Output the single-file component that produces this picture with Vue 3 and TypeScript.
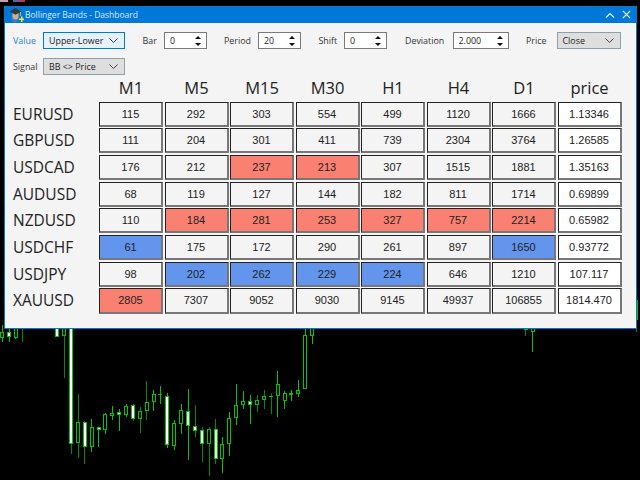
<script setup lang="ts">
type Tone = '' | 'hot' | 'cold'
interface Row { name: string; cells: (number | string)[]; tones: Record<number, Tone> }

const frames = ['M1', 'M5', 'M15', 'M30', 'H1', 'H4', 'D1', 'price']
const rows: Row[] = [
  { name: 'EURUSD', cells: [115, 292, 303, 554, 499, 1120, 1666, '1.13346'], tones: {} },
  { name: 'GBPUSD', cells: [111, 204, 301, 411, 739, 2304, 3764, '1.26585'], tones: {} },
  { name: 'USDCAD', cells: [176, 212, 237, 213, 307, 1515, 1881, '1.35163'], tones: { 2: 'hot', 3: 'hot' } },
  { name: 'AUDUSD', cells: [68, 119, 127, 144, 182, 811, 1714, '0.69899'], tones: {} },
  { name: 'NZDUSD', cells: [110, 184, 281, 253, 327, 757, 2214, '0.65982'], tones: { 1: 'hot', 2: 'hot', 3: 'hot', 4: 'hot', 5: 'hot', 6: 'hot' } },
  { name: 'USDCHF', cells: [61, 175, 172, 290, 261, 897, 1650, '0.93772'], tones: { 0: 'cold', 6: 'cold' } },
  { name: 'USDJPY', cells: [98, 202, 262, 229, 224, 646, 1210, '107.117'], tones: { 1: 'cold', 2: 'cold', 3: 'cold', 4: 'cold' } },
  { name: 'XAUUSD', cells: [2805, 7307, 9052, 9030, 9145, 49937, 106855, '1814.470'], tones: { 0: 'hot' } }
]

// x, wick top, wick bottom, body top, body bottom, kind (h hollow, f filled, d doji), dark wick
type C = [number, number, number, number, number, string, boolean?]
const raw: C[] = [
  [6, 0, 50, 20, 40, 'h'], [27, 10, 52, 20, 35, 'f'], [47, 10, 42, 10, 38, 'h'], [68, 10, 50, 0, 0, 'd', true],
  [172, 10, 35, 10, 35, 'f'], [192, 10, 158, 10, 32, 'h', true], [213, 10, 388, 10, 358, 'f', true],
  [234, 208, 398, 290, 355, 'h', true], [254, 288, 416, 292, 365, 'f', true], [275, 282, 380, 307, 365, 'h'],
  [296, 305, 365, 305, 314, 'f'], [316, 265, 327, 268, 314, 'h'], [337, 242, 285, 264, 273, 'h'],
  [358, 252, 317, 262, 271, 'f'], [378, 238, 275, 242, 269, 'h'], [399, 238, 287, 240, 282, 'f', true],
  [420, 247, 323, 258, 282, 'h', true], [440, 168, 285, 232, 259, 'h', true], [461, 195, 258, 208, 232, 'h'],
  [481, 183, 238, 208, 212, 'd'],
  [502, 205, 370, 212, 360, 'f'], [523, 285, 375, 295, 362, 'h'], [544, 238, 327, 256, 298, 'h'],
  [565, 192, 405, 257, 302, 'f'], [585, 240, 337, 304, 318, 'f', true], [606, 307, 410, 316, 356, 'f', true],
  [627, 307, 453, 313, 357, 'h', true], [647, 283, 417, 313, 403, 'f', true], [667, 337, 445, 356, 403, 'h'],
  [688, 260, 394, 280, 357, 'h'], [709, 178, 300, 241, 279, 'h'], [730, 198, 252, 227, 241, 'h'],
  [750, 210, 298, 227, 241, 'f'], [771, 210, 262, 224, 241, 'h', true], [792, 195, 252, 214, 225, 'h', true],
  [813, 205, 267, 214, 214, 'd', true], [833, 138, 277, 178, 212, 'h'], [854, 198, 252, 205, 227, 'h'],
  [874, 195, 228, 203, 210, 'f'], [895, 166, 215, 194, 206, 'h'], [916, 10, 193, 31, 193, 'h'], [937, 10, 58, 10, 32, 'h'],
  [1577, 0, 33, 0, 15, 'f', true], [1598, 0, 80, 0, 20, 'h']
]
const candles = raw.map(([x, wt, wb, bt, bb, kind, dark]) => ({
  x, kind, wick: dark ? '#008c00' : '#00c800',
  wt: wt + 975, wh: wb - wt, bt: bt + 975, bh: Math.max(bb - bt, 3)
}))
</script>

<template>
  <div class="screen">
    <svg class="chart" viewBox="0 0 1920 1440" width="640" height="480" shape-rendering="crispEdges" aria-hidden="true">
      <g v-for="(c, i) in candles" :key="i">
        <rect :x="c.x - 1.5" :y="c.wt" width="3" :height="c.wh" :fill="c.wick" />
        <rect v-if="c.kind === 'd'" :x="c.x - 6" :y="c.bt" width="12" height="3" fill="#00c800" />
        <template v-else>
          <rect :x="c.x - 6" :y="c.bt" width="12" :height="c.bh" fill="#00c800" />
          <rect :x="c.x - 3" :y="c.bt + 3" width="6" :height="Math.max(c.bh - 6, 0)" :fill="c.kind === 'f' ? '#fff' : '#000'" />
        </template>
      </g>
      <rect x="1911" y="900" width="3" height="60" fill="#00c800" />
      <rect x="1908" y="975" width="3" height="21" fill="#008c00" />
    </svg>
    <div class="flags"><i class="f-a"></i><i class="f-b"></i><i class="f-c"></i></div>

    <section class="window">
      <header class="titlebar">
        <svg class="appicon" viewBox="0 0 15 16" width="15" height="16">
          <circle cx="6" cy="12" r="3.600" fill="#3a78c8" />
          <path d="M3.500 6h6v3.500a3 3 0 0 1-6 0z" fill="#d0b088" />
          <path d="M0.500 4.500 6.500 1l6 3.500-6 3.200z" fill="#3a3a3a" />
          <path d="M11.500 5v4" stroke="#d8b040" stroke-width="1" />
          <path d="M10 11.500h2V9.500h1.500v2h1.500V13h-1.500v2H12v-2h-2z" fill="#f7e040" />
        </svg>
        <span class="title">Bollinger Bands - Dashboard</span>
        <svg class="winbtn chev" viewBox="0 0 10 6" width="10" height="6"><path d="M1 5.500 5 1.500l4 4" fill="none" stroke="#e8f2fb" stroke-width="1.200" /></svg>
        <svg class="winbtn" viewBox="0 0 9 9" width="9" height="9"><path d="M.8.800l7.400 7.400M8.200.800.800 8.200" fill="none" stroke="#e8f2fb" stroke-width="1.200" /></svg>
      </header>

      <div class="content">
        <div class="controls">
          <label class="lab w-value active">Value</label>
          <div class="select focus w-select"><span>Upper-Lower</span><svg viewBox="0 0 9 5" width="9" height="5"><path d="M.5.500l4 4 4-4" fill="none" stroke="#333" /></svg></div>
          <label class="lab gap w-bar">Bar</label>
          <div class="spin w-spin"><span>0</span><i class="arrows"><b class="a-up"></b><b class="a-down"></b></i></div>
          <label class="lab gap w-period">Period</label>
          <div class="spin w-spin2"><span>20</span><i class="arrows"><b class="a-up"></b><b class="a-down"></b></i></div>
          <label class="lab gap w-shift">Shift</label>
          <div class="spin w-spin"><span>0</span><i class="arrows"><b class="a-up"></b><b class="a-down"></b></i></div>
          <label class="lab gap w-dev">Deviation</label>
          <div class="spin w-spin3"><span>2.000</span><i class="arrows"><b class="a-up"></b><b class="a-down"></b></i></div>
          <label class="lab gap w-price">Price</label>
          <div class="select grey w-close"><span>Close</span><svg viewBox="0 0 9 5" width="9" height="5"><path d="M.5.500l4 4 4-4" fill="none" stroke="#444" /></svg></div>
        </div>
        <div class="controls second">
          <label class="lab w-value">Signal</label>
          <div class="select grey w-select"><span>BB &lt;&gt; Price</span><svg viewBox="0 0 9 5" width="9" height="5"><path d="M.5.500l4 4 4-4" fill="none" stroke="#444" /></svg></div>
        </div>

        <div class="board">
          <div class="corner"></div>
          <div v-for="f in frames" :key="f" class="head">{{ f }}</div>
          <template v-for="r in rows" :key="r.name">
            <div class="sym">{{ r.name }}</div>
            <div
              v-for="(v, i) in r.cells"
              :key="i"
              class="cell"
              :class="[r.tones[i], { last: i === 7 }]"
            >{{ v }}</div>
          </template>
        </div>
      </div>
    </section>
  </div>
</template>

<style>
html, body { margin: 0; background: #000; }
</style>

<style scoped>
.screen {
  position: relative;
  width: 640px;
  height: 480px;
  overflow: hidden;
  background: #000;
  padding: 6px 0 0 4px;
  box-sizing: border-box;
}
.chart { position: absolute; left: 0; top: 0; }
.flags { position: absolute; left: 0; top: 0; display: flex; }
.flags i { display: block; height: 2px; }
.f-a { width: 8px; background: #c9a0a8; margin-right: 5px; }
.f-b { width: 6px; background: #5a60a8; }
.f-c { width: 6px; background: #b04050; }

.window {
  position: relative;
  width: 633px;
  height: 323px;
  box-sizing: border-box;
  background: #f4f4f4;
  border: 1px solid #0078d7;
  border-top: 0;
}
.titlebar {
  display: flex;
  align-items: center;
  height: 17px;
  margin: 0 -1px;
  padding: 0 3px 0 5px;
  background: #0078d7;
  color: #dcebf9;
  font: 8.500px "Open Sans", sans-serif;
}
.appicon { margin-top: 1px; flex: none; }
.title { margin-left: 1px; white-space: nowrap; flex: 1; }
.winbtn { flex: none; margin-left: 7px; margin-right: 3px; }
.winbtn.chev { margin-right: 0; }

.content { padding: 9px 0 0 8px; }
.controls {
  display: flex;
  align-items: center;
  height: 17px;
  font: 8.900px "Open Sans", sans-serif;
  color: #222;
}
.second { margin-top: 9px; }
.lab { display: block; flex: none; color: #333; white-space: nowrap; }
.lab.active { color: #2a7fcc; }
.gap { margin-left: 17.500px; }
.w-value { width: 30px; }
.w-bar { width: 21.500px; }
.w-period { width: 34px; }
.w-shift { width: 25.500px; }
.w-dev { width: 47.500px; margin-left: 18.500px; }
.w-price { width: 30.500px; }
.w-select { width: 82px; }
.w-close { width: 64px; }
.w-spin { width: 42.500px; }
.w-spin2 { width: 43px; }
.w-spin3 { width: 56px; }

.select, .spin {
  height: 17px;
  box-sizing: border-box;
  flex: none;
  display: flex;
  align-items: center;
  justify-content: space-between;
  padding: 0 5px;
  white-space: nowrap;
}
.select svg { margin-right: 1px; }
.focus { border: 1px solid #0078d7; background: #e5f1fb; }
.grey { border: 1px solid #8fa0ab; background: #dedede; }
.spin { border: 1px solid #7a7a7a; background: #fff; padding-right: 0; }
.arrows {
  display: flex;
  flex-direction: column;
  justify-content: center;
  gap: 4px;
  width: 14px;
  align-items: center;
  padding-right: 1px;
}
.arrows b { display: block; width: 0; height: 0; border-left: 3px solid transparent; border-right: 3px solid transparent; }
.a-up { border-bottom: 3px solid #111; }
.a-down { border-top: 3px solid #111; }

.board {
  display: grid;
  grid-template-columns: 84.500px repeat(8, 64px);
  grid-template-rows: 24px repeat(8, 25.200px);
  column-gap: 1.500px;
  row-gap: 1.500px;
  margin-top: 1px;
}
.head {
  font: 16.500px/24px "Open Sans", sans-serif;
  color: #222;
  text-align: center;
}
.sym {
  font: 15.500px/25px "Open Sans", sans-serif;
  color: #222;
}
.cell {
  box-sizing: border-box;
  background: #f4f4f4;
  border-top: 1px solid #222;
  border-left: 1px solid #222;
  border-right: 2px solid #777;
  border-bottom: 2px solid #777;
  font: 11px/22px "Liberation Sans", sans-serif;
  color: #222;
  text-align: center;
}
.last { background: #fff; }
.hot { background: #fa8072; }
.cold { background: #6495ed; }
</style>
